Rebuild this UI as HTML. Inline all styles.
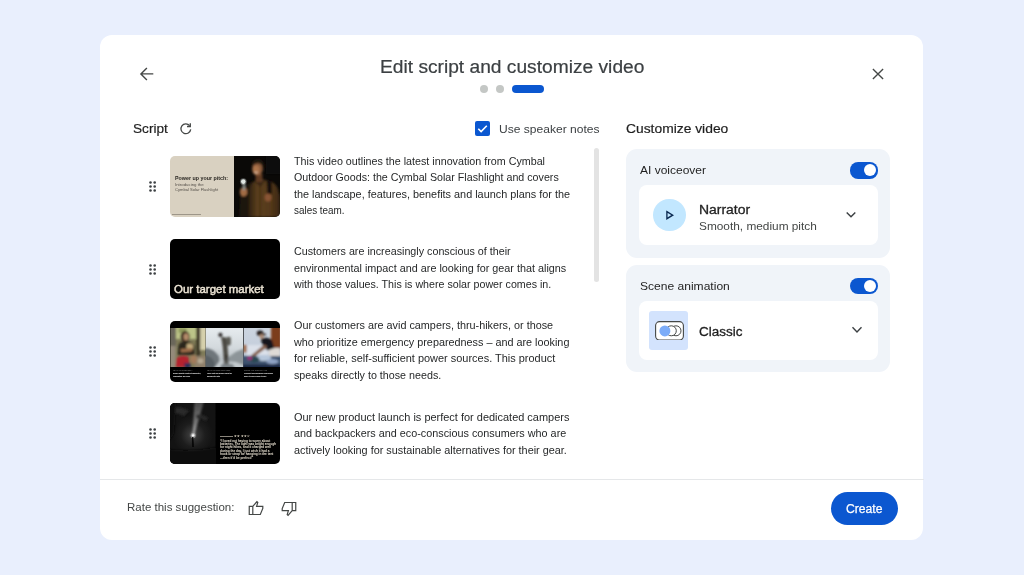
<!DOCTYPE html>
<html><head><meta charset="utf-8"><title>Edit script and customize video</title>
<style>
*{box-sizing:border-box;margin:0;padding:0}
html,body{width:1024px;height:575px;overflow:hidden}
body{background:#e9effd;font-family:"Liberation Sans",sans-serif;color:#1f1f1f;position:relative}
.abs{position:absolute}
#card{position:absolute;left:100.2px;top:34.8px;width:823.3px;height:505.2px;background:#fff;border-radius:12px}
.t{position:absolute;white-space:nowrap;transform-origin:0 50%}
.thumb{position:absolute;left:170.4px;width:109.2px;height:60.8px;border-radius:5px;overflow:hidden;background:#000}
.handle{position:absolute;left:149.3px;width:7.2px;height:11px}
.panel{position:absolute;left:626.3px;width:264.2px;background:#f0f4f9;border-radius:11px}
.inner{position:absolute;left:639.3px;width:238.3px;background:#fff;border-radius:8px}
.toggle{position:absolute;left:850.2px;width:27.5px;height:16.2px;border-radius:8.1px;background:#0b57d0}
.toggle i{position:absolute;right:2.1px;top:2.1px;width:12px;height:12px;border-radius:50%;background:#fff}
.tiny{position:absolute;white-space:nowrap;font-weight:bold;color:#e9e1d1}
</style></head><body>
<div id="card"></div>
<!-- back arrow -->
<svg class="abs" style="left:139px;top:66px" width="16" height="16" viewBox="0 0 16 16"><path d="M14.3 7.9H2.4M7.9 1.9L1.9 7.9l6 6" fill="none" stroke="#444746" stroke-width="1.4"/></svg>
<!-- close -->
<svg class="abs" style="left:869.5px;top:66px" width="16" height="16" viewBox="0 0 16 16"><path d="M2.9 2.9l10.2 10.2M13.1 2.9L2.9 13.1" fill="none" stroke="#444746" stroke-width="1.35"/></svg>
<!-- stepper -->
<div class="abs" style="left:480.4px;top:85px;width:8px;height:8px;border-radius:50%;background:#c4c7c5"></div>
<div class="abs" style="left:496px;top:85px;width:8px;height:8px;border-radius:50%;background:#c4c7c5"></div>
<div class="abs" style="left:511.6px;top:85px;width:32px;height:8.2px;border-radius:4.1px;background:#0b57d0"></div>
<!-- refresh -->
<svg class="abs" style="left:179px;top:122px" width="14" height="14" viewBox="0 0 14 14"><path d="M10.6 3.6A4.9 4.9 0 1 0 11.7 7.4" fill="none" stroke="#444746" stroke-width="1.3"/><path d="M11.3 1.2v3.3H8" fill="none" stroke="#444746" stroke-width="1.3"/></svg>
<!-- checkbox -->
<div class="abs" style="left:474.6px;top:121.3px;width:15px;height:15px;border-radius:2px;background:#0b57d0"></div>
<svg class="abs" style="left:474.6px;top:121.3px" width="15" height="15" viewBox="0 0 15 15"><path d="M3.3 7.7l2.8 2.8L11.8 4.7" fill="none" stroke="#fff" stroke-width="1.6"/></svg>
<!-- scrollbar -->
<div class="abs" style="left:593.7px;top:148px;width:5.8px;height:134.3px;border-radius:3px;background:#e3e3e3"></div>
<!-- handles -->
<svg class="handle" style="top:181px" viewBox="0 0 7.2 11"><g fill="#3c4043"><circle cx="1.5" cy="1.5" r="1.3"/><circle cx="5.7" cy="1.5" r="1.3"/><circle cx="1.5" cy="5.5" r="1.3"/><circle cx="5.7" cy="5.5" r="1.3"/><circle cx="1.5" cy="9.5" r="1.3"/><circle cx="5.7" cy="9.5" r="1.3"/></g></svg>
<svg class="handle" style="top:263.6px" viewBox="0 0 7.2 11"><g fill="#3c4043"><circle cx="1.5" cy="1.5" r="1.3"/><circle cx="5.7" cy="1.5" r="1.3"/><circle cx="1.5" cy="5.5" r="1.3"/><circle cx="5.7" cy="5.5" r="1.3"/><circle cx="1.5" cy="9.5" r="1.3"/><circle cx="5.7" cy="9.5" r="1.3"/></g></svg>
<svg class="handle" style="top:346px" viewBox="0 0 7.2 11"><g fill="#3c4043"><circle cx="1.5" cy="1.5" r="1.3"/><circle cx="5.7" cy="1.5" r="1.3"/><circle cx="1.5" cy="5.5" r="1.3"/><circle cx="5.7" cy="5.5" r="1.3"/><circle cx="1.5" cy="9.5" r="1.3"/><circle cx="5.7" cy="9.5" r="1.3"/></g></svg>
<svg class="handle" style="top:428.4px" viewBox="0 0 7.2 11"><g fill="#3c4043"><circle cx="1.5" cy="1.5" r="1.3"/><circle cx="5.7" cy="1.5" r="1.3"/><circle cx="1.5" cy="5.5" r="1.3"/><circle cx="5.7" cy="5.5" r="1.3"/><circle cx="1.5" cy="9.5" r="1.3"/><circle cx="5.7" cy="9.5" r="1.3"/></g></svg>

<!-- thumbnails -->
<div class="thumb" id="th1" style="top:156px;background:#d9d1c1">
  <svg class="abs" style="left:63.5px;top:0" width="46" height="61" viewBox="0 0 46 61">
    <defs><filter id="b1" x="-20%" y="-20%" width="140%" height="140%"><feGaussianBlur stdDeviation="0.9"/></filter>
    <linearGradient id="jk" x1="0" y1="0" x2="1" y2="0"><stop offset="0" stop-color="#2a1c0e"/><stop offset=".3" stop-color="#5c3f1d"/><stop offset=".7" stop-color="#55391a"/><stop offset="1" stop-color="#3a2611"/></linearGradient></defs>
    <rect width="46" height="61" fill="#0a0907"/>
    <g filter="url(#b1)">
      <rect x="32" y="-2" width="16" height="20" fill="#0c0e11"/>
      <!-- arm left dark -->
      <path d="M5 61L6 42Q8 32 15 27L20 25L20 61Z" fill="#1c140c"/>
      <!-- jacket -->
      <path d="M14 61L15 34Q16 27 22 25L31 24Q42 26 44 33L46 40L46 61Z" fill="url(#jk)"/>
      <path d="M21 26L26.5 31L31 25L30 23L22 23Z" fill="#3a2814"/>
      <rect x="25.6" y="30" width="1" height="31" fill="#3a2612"/>
      <!-- strap -->
      <path d="M32.5 24L37.5 25L38 38L33.5 38Z" fill="#15100a"/>
      <!-- neck -->
      <rect x="21.5" y="18" width="7" height="8" fill="#5e3a22"/>
      <!-- face -->
      <ellipse cx="23.6" cy="12.6" rx="5.4" ry="7" fill="#8a5a3a"/>
      <ellipse cx="22" cy="14" rx="3.4" ry="4.4" fill="#ac744c"/>
      <path d="M17.6 9Q18 3 24.5 3Q31 3.5 30 12L28.6 13.5Q28.6 7 23.5 7.2Q19.4 7.6 18.6 11Z" fill="#1b130d"/>
      <ellipse cx="22" cy="16.5" rx="2" ry="0.8" fill="#d9c0a8"/>
      <!-- hands -->
      <ellipse cx="9.5" cy="36" rx="3.6" ry="4.4" fill="#a26c44"/>
      <ellipse cx="34" cy="41.5" rx="3.4" ry="4" fill="#8a5434"/>
      <!-- flashlight -->
      <rect x="8.6" y="27" width="2.4" height="7" fill="#8f948f"/>
    </g>
    <circle cx="9.3" cy="25.6" r="2.3" fill="#e9efec"/>
    <circle cx="9.3" cy="25.6" r="3.4" fill="#cfd8d4" opacity=".35"/>
  </svg>
  <div class="abs" style="left:2px;top:58px;width:29px;height:1px;background:#8d877b;opacity:.8"></div>
</div>
<div class="thumb" id="th2" style="top:238.5px;background:#000"></div>
<div class="thumb" id="th3" style="top:320.9px;background:#000">
  <svg class="abs" style="left:0;top:6.9px" width="110" height="39.2" viewBox="0 0 110 39.2">
    <defs><filter id="b3" x="-10%" y="-10%" width="120%" height="120%"><feGaussianBlur stdDeviation="0.8"/></filter>
    <linearGradient id="fog" x1="0" y1="0" x2="0" y2="1"><stop offset="0" stop-color="#e6ebee"/><stop offset=".5" stop-color="#d3d9dd"/><stop offset="1" stop-color="#a9b1b5"/></linearGradient>
    <linearGradient id="room" x1="0" y1="0" x2="0" y2="1"><stop offset="0" stop-color="#ccd5e0"/><stop offset=".6" stop-color="#c3cddb"/><stop offset="1" stop-color="#9fb0c6"/></linearGradient>
    <clipPath id="c1"><rect x="0.5" y="0" width="35.1" height="39.2"/></clipPath>
    <clipPath id="c2"><rect x="35.6" y="0" width="37.6" height="39.2"/></clipPath>
    <clipPath id="c3"><rect x="73.4" y="0" width="36.6" height="39.2"/></clipPath>
    </defs>
    <!-- photo1 : origin 0.5 -->
    <g clip-path="url(#c1)"><g transform="translate(0.5 0)">
      <rect x="0" y="0" width="35.1" height="39.2" fill="#7f7b58"/>
      <g filter="url(#b3)">
        <rect x="5" y="-2" width="22" height="13" fill="#bcc488"/>
        <rect x="8" y="0" width="8" height="5" fill="#8f9a5c"/>
        <rect x="29.5" y="-2" width="7" height="24" fill="#d6d0ac"/>
        <rect x="25.7" y="-2" width="4" height="30" fill="#3c3826"/>
        <rect x="-2" y="-2" width="7.5" height="22" fill="#6a665a"/>
        <rect x="-2" y="18" width="7" height="23" fill="#948a7a"/>
        <rect x="24" y="28" width="13" height="13" fill="#8f806a"/>
        <ellipse cx="30" cy="33" rx="3" ry="2.5" fill="#b8ab94"/>
        <!-- woman -->
        <ellipse cx="14.6" cy="8.6" rx="4.6" ry="5.6" fill="#3a281a"/>
        <ellipse cx="15.6" cy="8.8" rx="2.7" ry="3.6" fill="#b48c6a"/>
        <path d="M7 27L8 17Q10 13 15 13.5Q22 13 24 18L24 27Z" fill="#2a281a"/>
        <rect x="16" y="15.5" width="6.5" height="6.5" rx="2" fill="#c2ab7c"/>
        <path d="M10 21L21 20L21.5 23.5L10.5 24.5Z" fill="#9c6c4a"/>
        <path d="M5 39.2L6 30Q11 26.5 18 29L19 39.2Z" fill="#b4202e"/>
        <rect x="14" y="35" width="6" height="5" fill="#2c2e58"/>
        <ellipse cx="23" cy="31.5" rx="3.2" ry="4.2" fill="#a47c5c"/>
      </g>
    </g></g>
    <!-- photo2 : origin 35.6 -->
    <g clip-path="url(#c2)"><g transform="translate(35.6 0)">
      <rect x="0" y="0" width="37.6" height="39.2" fill="url(#fog)"/>
      <g filter="url(#b3)">
        <path d="M-2 20Q8 20 13 28L15 41L-2 41Z" fill="#6e767a"/>
        <path d="M-2 27Q5 27 9 34L9 41L-2 41Z" fill="#596165"/>
        <path d="M22 30L30 24L40 20L40 37L24 37Z" fill="#8d9599"/>
        <path d="M8 41L14 33L30 34L40 38L40 41Z" fill="#c3cace"/>
        <path d="M14 41L16 36L27 36L30 41Z" fill="#7a8286"/>
        <!-- hiker -->
        <circle cx="14.8" cy="6.9" r="2.1" fill="#2e2c2a"/>
        <path d="M15.5 9L21 9.5L22 19L22.5 28L18 28L17 18Z" fill="#4b4a43"/>
        <rect x="21" y="8.8" width="4.2" height="8.6" rx="1.6" fill="#5a5a52"/>
        <path d="M18.2 27L22.6 27L23 36L20.8 36L20.6 29L20 36L18.2 36Z" fill="#3c3b36"/>
      </g>
    </g></g>
    <!-- photo3 : origin 73.4 -->
    <g clip-path="url(#c3)"><g transform="translate(73.4 0)">
      <rect x="0" y="0" width="36.6" height="39.2" fill="url(#room)"/>
      <g filter="url(#b3)">
        <rect x="27.6" y="-2" width="10" height="24" fill="#7c3e1e"/>
        <rect x="3" y="17" width="22" height="10" fill="#dbe1ea"/>
        <rect x="0" y="17" width="3.2" height="7.5" fill="#9c6038"/>
        <rect x="25.6" y="20" width="11" height="13" fill="#dedad6"/>
        <!-- person -->
        <ellipse cx="16.7" cy="5.2" rx="3.3" ry="2.7" fill="#1c1715"/>
        <ellipse cx="20.5" cy="6.6" rx="2" ry="1.2" fill="#1c1715"/>
        <ellipse cx="18.2" cy="8.4" rx="2" ry="2.3" fill="#b08c74"/>
        <path d="M17.5 11Q24 8 28.5 12L31 20L24 22.5L19 17Z" fill="#17171b"/>
        <path d="M21 16.5L24 19L10 29.5L7.5 27.5Z" fill="#86624e"/>
        <!-- bed -->
        <rect x="-2" y="28" width="40" height="13" fill="#3d5270"/>
        <ellipse cx="20" cy="30" rx="8" ry="3" fill="#b7c7db"/>
        <ellipse cx="11" cy="31.5" rx="5" ry="3" fill="#2b4a52"/>
        <ellipse cx="6.3" cy="30.3" rx="2.6" ry="1.7" fill="#a62a7c"/>
        <ellipse cx="29" cy="33.5" rx="6" ry="2.5" fill="#8fa3c4"/>
        <rect x="-2" y="36.5" width="40" height="4" fill="#1c2642"/>
      </g>
    </g></g>
  </svg>
  <div class="tiny" style="left:2.2px;top:48.6px;font-size:8px;line-height:10px;color:#9a9a9a;font-weight:normal;letter-spacing:1.2px;transform-origin:0 0;transform:scale(.18,.25)">FOR THE OUTDOORSY</div>
  <div class="tiny" style="left:2.2px;top:51.4px;font-size:10px;line-height:10.4px;color:#fff;transform-origin:0 0;transform:scale(.17,.25)">Spend quality nights at campsites,<br>exploration and more</div>
  <div class="tiny" style="left:36.2px;top:48.6px;font-size:8px;line-height:10px;color:#9a9a9a;font-weight:normal;letter-spacing:1.2px;transform-origin:0 0;transform:scale(.18,.25)">FOR THE PREPARED ONES</div>
  <div class="tiny" style="left:36.2px;top:51.4px;font-size:10px;line-height:10.4px;color:#fff;transform-origin:0 0;transform:scale(.17,.25)">Have light and power when the<br>unexpected hits</div>
  <div class="tiny" style="left:73.6px;top:48.6px;font-size:8px;line-height:10px;color:#9a9a9a;font-weight:normal;letter-spacing:1.2px;transform-origin:0 0;transform:scale(.18,.25)">UNDER THE SHEETS FANS</div>
  <div class="tiny" style="left:73.6px;top:51.4px;font-size:10px;line-height:10.4px;color:#fff;transform-origin:0 0;transform:scale(.17,.25)">Compact and backpack friendliness<br>when it comes down to size</div>
</div>
<div class="thumb" id="th4" style="top:403.4px;background:#000">
  <svg class="abs" style="left:0;top:0" width="45.5" height="61" viewBox="0 0 45.5 61">
    <defs><filter id="b4" x="-20%" y="-20%" width="140%" height="140%"><feGaussianBlur stdDeviation="1.3"/></filter>
    <radialGradient id="glow" cx="23" cy="32" r="20" gradientUnits="userSpaceOnUse"><stop offset="0" stop-color="#6e6e6e"/><stop offset=".22" stop-color="#363636"/><stop offset=".6" stop-color="#1d1d1d"/><stop offset="1" stop-color="#131313"/></radialGradient>
    <linearGradient id="beam" x1="0" y1="1" x2="0" y2="0"><stop offset="0" stop-color="#b4b4b4"/><stop offset=".35" stop-color="#787878"/><stop offset="1" stop-color="#444444"/></linearGradient></defs>
    <rect width="45.5" height="61" fill="url(#glow)"/>
    <g filter="url(#b4)">
      <path d="M22.4 33L24.5 -2L34 -2L24 33Z" fill="url(#beam)"/>
      <path d="M3 6Q10 2 19 8L14 13Q8 9 3 11Z" fill="#2c2c2c"/>
      <path d="M26 12Q32 10 38 15L36 18Q31 14 27 16Z" fill="#2a2a2a"/>
      <path d="M-2 46Q18 50 48 44L48 63L-2 63Z" fill="#0c0c0c"/>
      <path d="M-2 -2L6 -2L4 30L-2 40Z" fill="#0e0e0e"/>
    </g>
    <circle cx="23.1" cy="32.6" r="1.3" fill="#f4f4f4"/>
    <circle cx="23.1" cy="32.6" r="2.6" fill="#fff" opacity=".35"/>
    <path d="M21.9 34.5L23.3 33.6L24 44L22 44Z" fill="#080808"/>
  </svg>
  <div class="abs" style="left:49.8px;top:32.7px;width:12.5px;height:.7px;background:#8a857b"></div>
  <div class="tiny" style="left:64px;top:30.9px;font-size:12px;line-height:16px;color:#d8cfbc;letter-spacing:2.4px;transform-origin:0 0;transform:scale(.25)">★★★★☆</div>
  <div class="tiny" style="left:49.8px;top:35.3px;font-size:12.4px;line-height:13.5px;transform-origin:0 0;transform:scale(.25)">“I loved not having to worry about<br>batteries. The light was bright enough<br>for night hikes, and it charged well<br>during the day. I just wish it had a<br>hook or strap for hanging in the tent<br>—then it’d be perfect!”</div>
</div>

<!-- right column -->
<div class="panel" style="top:148.8px;height:109.2px"></div>
<div class="inner" style="top:185.2px;height:59.8px"></div>
<div class="toggle" style="top:162.4px"><i></i></div>
<div class="abs" style="left:653.1px;top:198.7px;width:32.5px;height:32.5px;border-radius:50%;background:#c2e7ff"></div>
<svg class="abs" style="left:664px;top:209px" width="12" height="12" viewBox="0 0 12 12"><path d="M2.9 2.7l5.8 3.5-5.8 3.5z" fill="none" stroke="#0b2a52" stroke-width="1.35" stroke-linejoin="miter"/></svg>
<svg class="abs" style="left:845px;top:210.6px" width="12" height="8" viewBox="0 0 12 8"><path d="M1.7 1.4L6 5.8l4.3-4.4" fill="none" stroke="#3c4043" stroke-width="1.4"/></svg>

<div class="panel" style="top:264.9px;height:107.5px"></div>
<div class="inner" style="top:301px;height:58.8px"></div>
<div class="toggle" style="top:278px"><i></i></div>
<div class="abs" style="left:649.3px;top:311.1px;width:39px;height:38.6px;border-radius:3px;background:#d3e3fd"></div>
<svg class="abs" style="left:654.5px;top:320.5px" width="29" height="19.6" viewBox="0 0 29 19.6"><rect x="0.6" y="0.6" width="27.8" height="18.4" rx="4" fill="#fff" stroke="#444746" stroke-width="1.1"/><circle cx="21" cy="9.8" r="5" fill="#fff" stroke="#444746" stroke-width="1"/><circle cx="16.3" cy="9.8" r="5" fill="#fff" stroke="#444746" stroke-width="1"/><circle cx="9.9" cy="9.9" r="5.5" fill="#7cacf8"/></svg>
<svg class="abs" style="left:851.3px;top:326.4px" width="12" height="8" viewBox="0 0 12 8"><path d="M1.5 1.3L6 5.9l4.5-4.6" fill="none" stroke="#3c4043" stroke-width="1.4"/></svg>

<!-- footer -->
<div class="abs" style="left:100px;top:478.6px;width:824px;height:1px;background:#e5e7e9"></div>
<svg class="abs" style="left:247px;top:500px" width="18" height="16" viewBox="0 0 18 16"><path d="M2.25 14.5V6.4H5.8L9.9 1.6l0.9 0.9L9.6 6.4h6.2v2L13.3 14.5Z M5.8 6.4v8.1" fill="none" stroke="#444746" stroke-width="1.2" stroke-linejoin="miter"/></svg>
<svg class="abs" style="left:280px;top:501.3px" width="18" height="16" viewBox="0 0 18 16"><g transform="rotate(180 9 8)"><path d="M2.25 14.5V6.4H5.8L9.9 1.6l0.9 0.9L9.6 6.4h6.2v2L13.3 14.5Z M5.8 6.4v8.1" fill="none" stroke="#444746" stroke-width="1.2" stroke-linejoin="miter"/></g></svg>
<div class="abs" style="left:831px;top:492px;width:66.5px;height:33px;border-radius:17px;background:#0b57d0"></div>

<!-- text -->
<div class="t" style="font-size:11px;color:#262829;left:294px;line-height:14.3px;top:153.80px;transform:scaleX(0.9751)">This video outlines the latest innovation from Cymbal</div>
<div class="t" style="font-size:11px;color:#262829;left:294px;line-height:14.3px;top:170.30px;transform:scaleX(0.9708)">Outdoor Goods: the Cymbal Solar Flashlight and covers</div>
<div class="t" style="font-size:11px;color:#262829;left:294px;line-height:14.3px;top:186.80px;transform:scaleX(0.9876)">the landscape, features, benefits and launch plans for the</div>
<div class="t" style="font-size:11px;color:#262829;left:294px;line-height:14.3px;top:203.30px;transform:scaleX(0.8996)">sales team.</div>
<div class="t" style="font-size:11px;color:#262829;left:294px;line-height:14.3px;top:244.40px;transform:scaleX(0.9760)">Customers are increasingly conscious of their</div>
<div class="t" style="font-size:11px;color:#262829;left:294px;line-height:14.3px;top:260.90px;transform:scaleX(0.9829)">environmental impact and are looking for gear that aligns</div>
<div class="t" style="font-size:11px;color:#262829;left:294px;line-height:14.3px;top:277.40px;transform:scaleX(0.9702)">with those values. This is where solar power comes in.</div>
<div class="t" style="font-size:11px;color:#262829;left:294px;line-height:14.3px;top:318.40px;transform:scaleX(0.9834)">Our customers are avid campers, thru-hikers, or those</div>
<div class="t" style="font-size:11px;color:#262829;left:294px;line-height:14.3px;top:334.90px;transform:scaleX(0.9834)">who prioritize emergency preparedness – and are looking</div>
<div class="t" style="font-size:11px;color:#262829;left:294px;line-height:14.3px;top:351.40px;transform:scaleX(0.9954)">for reliable, self-sufficient power sources. This product</div>
<div class="t" style="font-size:11px;color:#262829;left:294px;line-height:14.3px;top:367.90px;transform:scaleX(0.9750)">speaks directly to those needs.</div>
<div class="t" style="font-size:11px;color:#262829;left:294px;line-height:14.3px;top:409.90px;transform:scaleX(0.9965)">Our new product launch is perfect for dedicated campers</div>
<div class="t" style="font-size:11px;color:#262829;left:294px;line-height:14.3px;top:426.40px;transform:scaleX(0.9829)">and backpackers and eco-conscious consumers who are</div>
<div class="t" style="font-size:11px;color:#262829;left:294px;line-height:14.3px;top:442.90px;transform:scaleX(0.9874)">actively looking for sustainable alternatives for their gear.</div>
<div class="t" style="font-size:17.5px;color:#3c4043;left:379.8px;-webkit-text-stroke:0.2px #3c4043;line-height:22.75px;top:55.90px;transform:scaleX(1.0960)">Edit script and customize video</div>
<div class="t" style="font-size:13px;color:#1f1f1f;left:133.2px;-webkit-text-stroke:0.2px #1f1f1f;line-height:16.9px;top:120.80px;transform:scaleX(1.0471)">Script</div>
<div class="t" style="font-size:11.5px;color:#3c4043;left:498.7px;line-height:14.95px;top:121.80px;transform:scaleX(1.0481)">Use speaker notes</div>
<div class="t" style="font-size:13px;color:#1f1f1f;left:626.2px;-webkit-text-stroke:0.2px #1f1f1f;line-height:16.9px;top:121.10px;transform:scaleX(1.0644)">Customize video</div>
<div class="t" style="font-size:11.5px;color:#1f1f1f;left:639.8px;line-height:14.95px;top:163.30px;transform:scaleX(1.0430)">AI voiceover</div>
<div class="t" style="font-size:12.5px;color:#1f1f1f;left:699.3px;-webkit-text-stroke:0.3px #1f1f1f;line-height:16.25px;top:201.50px;transform:scaleX(1.1147)">Narrator</div>
<div class="t" style="font-size:11.5px;color:#444746;left:699.3px;line-height:14.95px;top:218.80px;transform:scaleX(1.0295)">Smooth, medium pitch</div>
<div class="t" style="font-size:11.5px;color:#1f1f1f;left:639.7px;line-height:14.95px;top:279.20px;transform:scaleX(1.0482)">Scene animation</div>
<div class="t" style="font-size:12.5px;color:#1f1f1f;left:699.3px;-webkit-text-stroke:0.3px #1f1f1f;line-height:16.25px;top:324.40px;transform:scaleX(1.0770)">Classic</div>
<div class="t" style="font-size:11.5px;color:#444746;left:127.1px;line-height:14.95px;top:500.40px;transform:scaleX(0.9999)">Rate this suggestion:</div>
<div class="t" style="font-size:12.5px;color:#ffffff;left:845.8px;-webkit-text-stroke:0.25px #ffffff;line-height:16.25px;top:500.50px;transform:scaleX(0.9725)">Create</div>
<div class="t" style="font-size:11.5px;color:#ece4d4;left:174.1px;-webkit-text-stroke:0.45px #ece4d4;line-height:14.95px;top:282.40px;transform:scaleX(0.9964)">Our target market</div>
<div class="t" style="font-size:22.0px;color:#2a2722;left:174.7px;font-weight:bold;line-height:28.6px;top:175.45px;transform-origin:0 0;transform:scale(0.2418,0.2500)">Power up your pitch:</div>
<div class="t" style="font-size:17.2px;color:#55504a;left:174.7px;line-height:22.36px;top:182.25px;transform-origin:0 0;transform:scale(0.2524,0.2500)">Introducing the</div>
<div class="t" style="font-size:17.2px;color:#55504a;left:174.7px;line-height:22.36px;top:187.35px;transform-origin:0 0;transform:scale(0.2375,0.2500)">Cymbal Solar Flashlight</div>
</body></html>
